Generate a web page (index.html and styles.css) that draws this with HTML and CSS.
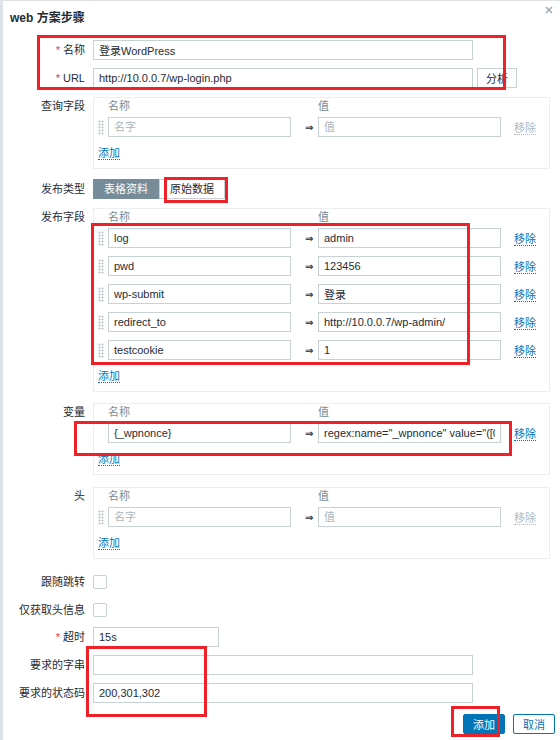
FILE: index.html
```html
<!DOCTYPE html>
<html lang="zh-cn">
<head>
    <meta charset="UTF-8">
    <meta name="viewport" content="width=device-width, initial-scale=1.0">
    <title>web 方案步骤</title>
    <link rel="stylesheet" href="styles.css">
</head>
<body>
    <div class="dialog">
        <div class="head">
            <h3>web 方案步骤</h3>
            <svg class="close" width="8" height="8" viewBox="0 0 8 8"><path d="M1 1L7 7M7 1L1 7" stroke="#a3adb3" stroke-width="1.6"/></svg>
        </div>
        <div class="form">
            <div class="row">
                <label class="lbl req">名称</label>
                <div><input class="field w-lg" type="text" value="登录WordPress"></div>
            </div>
            <div class="row">
                <label class="lbl req">URL</label>
                <div class="inline">
                    <input class="field w-lg" type="text" value="http://10.0.0.7/wp-login.php">
                    <button class="btn-plain">分析</button>
                </div>
            </div>

            <div class="row gap-9">
                <label class="lbl top">查询字段</label>
                <div class="box">
                    <div class="pairs hdr"><span></span><span>名称</span><span></span><span>值</span></div>
                    <div class="pairs">
                        <span class="drag"></span>
                        <input class="field" type="text" placeholder="名字">
                        <span class="arr">⇒</span>
                        <input class="field" type="text" placeholder="值">
                        <span><span class="rm off">移除</span></span>
                    </div>
                    <div class="add"><span>添加</span></div>
                </div>
            </div>

            <div class="row gap-10">
                <label class="lbl">发布类型</label>
                <div class="seg"><span class="on">表格资料</span><span>原始数据</span></div>
            </div>

            <div class="row gap-9">
                <label class="lbl top">发布字段</label>
                <div class="box">
                    <div class="pairs hdr"><span></span><span>名称</span><span></span><span>值</span></div>
                    <div class="pairs">
                        <span class="drag"></span>
                        <input class="field" type="text" value="log">
                        <span class="arr">⇒</span>
                        <input class="field" type="text" value="admin">
                        <span><span class="rm">移除</span></span>

                        <span class="drag"></span>
                        <input class="field" type="text" value="pwd">
                        <span class="arr">⇒</span>
                        <input class="field" type="text" value="123456">
                        <span><span class="rm">移除</span></span>

                        <span class="drag"></span>
                        <input class="field" type="text" value="wp-submit">
                        <span class="arr">⇒</span>
                        <input class="field" type="text" value="登录">
                        <span><span class="rm">移除</span></span>

                        <span class="drag"></span>
                        <input class="field" type="text" value="redirect_to">
                        <span class="arr">⇒</span>
                        <input class="field" type="text" value="http://10.0.0.7/wp-admin/">
                        <span><span class="rm">移除</span></span>

                        <span class="drag"></span>
                        <input class="field" type="text" value="testcookie">
                        <span class="arr">⇒</span>
                        <input class="field" type="text" value="1">
                        <span><span class="rm">移除</span></span>
                    </div>
                    <div class="add"><span>添加</span></div>
                </div>
            </div>

            <div class="row gap-11">
                <label class="lbl top">变量</label>
                <div class="box">
                    <div class="pairs hdr"><span></span><span>名称</span><span></span><span>值</span></div>
                    <div class="pairs">
                        <span></span>
                        <input class="field" type="text" value="{_wpnonce}">
                        <span class="arr">⇒</span>
                        <input class="field" type="text" value='regex:name="_wpnonce" value="([0-9a-z]{10})"'>
                        <span><span class="rm">移除</span></span>
                    </div>
                    <div class="add"><span>添加</span></div>
                </div>
            </div>

            <div class="row gap-12">
                <label class="lbl top">头</label>
                <div class="box">
                    <div class="pairs hdr"><span></span><span>名称</span><span></span><span>值</span></div>
                    <div class="pairs">
                        <span class="drag"></span>
                        <input class="field" type="text" placeholder="名字">
                        <span class="arr">⇒</span>
                        <input class="field" type="text" placeholder="值">
                        <span><span class="rm off">移除</span></span>
                    </div>
                    <div class="add"><span>添加</span></div>
                </div>
            </div>

            <div class="row gap-13">
                <label class="lbl">跟随跳转</label>
                <div><span class="chk"></span></div>
            </div>
            <div class="row">
                <label class="lbl">仅获取头信息</label>
                <div><span class="chk"></span></div>
            </div>
            <div class="row gap-7">
                <label class="lbl req">超时</label>
                <div><input class="field w-sm" type="text" value="15s"></div>
            </div>
            <div class="row">
                <label class="lbl">要求的字串</label>
                <div><input class="field w-lg" type="text" value=""></div>
            </div>
            <div class="row">
                <label class="lbl">要求的状态码</label>
                <div><input class="field w-lg" type="text" value="200,301,302"></div>
            </div>
        </div>
        <div class="foot">
            <button class="btn-main">添加</button>
            <button class="btn-alt">取消</button>
        </div>
    </div>

    <div class="mark mark-1"></div>
    <div class="mark mark-2"></div>
    <div class="mark mark-3"></div>
    <div class="mark mark-4"></div>
    <div class="mark mark-5"></div>
    <div class="mark mark-6"></div>
</body>
</html>
```

FILE: styles.css
```css
body {
    margin: 0;
    font-family: "Liberation Sans", Arial, "Noto Sans CJK SC", sans-serif;
    font-size: 11px;
    color: #1f2c33;
    background: #fff;
}
.dialog {
    position: relative;
    width: 557px;
    height: 739px;
    border-left: 3px solid #dde3e6;
    border-top: 1px solid #dde3e6;
    overflow: hidden;
}
.head {
    height: 34px;
    padding-left: 7px;
}
.head h3 {
    margin: 0;
    font-size: 12px;
    line-height: 34px;
    font-weight: bold;
}
.close {
    position: absolute;
    right: 7px;
    top: 5px;
}
.form {
    padding: 5px 10px 0 0;
}
.row {
    display: grid;
    grid-template-columns: 82px 1fr;
    column-gap: 8px;
    margin-top: 8px;
}
.row:first-child {
    margin-top: 0;
}
.gap-7 { margin-top: 7px; }
.gap-9 { margin-top: 9px; }
.gap-10 { margin-top: 10px; }
.gap-11 { margin-top: 11px; }
.gap-12 { margin-top: 12px; }
.gap-13 { margin-top: 13px; }
.lbl {
    text-align: right;
    line-height: 20px;
    white-space: nowrap;
}
.lbl.top {
    line-height: 16px;
    padding-top: 1px;
}
.req::before {
    content: "* ";
    color: #e0393e;
}
.field {
    box-sizing: border-box;
    height: 20px;
    border: 1px solid #c8d1d6;
    padding: 0 5px;
    margin: 0;
    font: inherit;
    color: inherit;
    background: #fff;
    outline: none;
}
.field::placeholder {
    color: #a9b6bd;
}
.w-lg { width: 380px; }
.w-sm { width: 126px; }
.inline {
    display: flex;
    align-items: center;
}
.btn-plain {
    box-sizing: border-box;
    height: 20px;
    margin-left: 4px;
    padding: 0 8px;
    border: 1px solid #c8d1d6;
    background: #fff;
    font: inherit;
    color: #1f2c33;
}
.box {
    border: 1px solid #ebeef0;
    padding: 0 10px 8px 4px;
}
.pairs {
    display: grid;
    grid-template-columns: 10px 183px 27px 183px 1fr;
    row-gap: 8px;
    align-items: center;
}
.pairs .field {
    width: 183px;
}
.hdr {
    line-height: 16px;
    color: #768d99;
    margin-bottom: 3px;
}
.drag {
    width: 6px;
    height: 15px;
    background: radial-gradient(circle, #c7cfd4 45%, transparent 55%) 0 0 / 3px 3px;
}
.arr {
    padding-left: 14px;
    font-family: "DejaVu Sans", sans-serif;
    font-size: 10px;
    font-weight: bold;
}
.rm {
    margin-left: 13px;
    color: #0275b8;
    border-bottom: 1px dotted #0275b8;
}
.rm.off {
    color: #acbbc2;
    border-bottom-color: #acbbc2;
}
.add {
    margin-top: 9px;
    line-height: 14px;
}
.add span {
    color: #0275b8;
    border-bottom: 1px dotted #0275b8;
}
.seg {
    display: flex;
}
.seg span {
    box-sizing: border-box;
    height: 20px;
    line-height: 18px;
    padding: 0 10px;
    border: 1px solid #c8d1d6;
}
.seg .on {
    background: #768d99;
    border-color: #768d99;
    color: #fff;
}
.chk {
    display: block;
    box-sizing: border-box;
    width: 14px;
    height: 14px;
    margin-top: 3px;
    border: 1px solid #c8d1d6;
    border-radius: 2px;
}
.foot {
    display: flex;
    justify-content: flex-end;
    gap: 8px;
    margin-top: 11px;
    padding-right: 5px;
}
.foot button {
    box-sizing: border-box;
    height: 20px;
    padding: 0 9px;
    font: inherit;
    border: 1px solid #0275b8;
    border-radius: 2px;
}
.btn-main {
    background: #0275b8;
    color: #fff;
}
.btn-alt {
    background: #fff;
    color: #0275b8;
}
.mark {
    position: absolute;
    box-sizing: border-box;
    border: 3px solid #ee2028;
}
.mark-1 { left: 37px; top: 35px; width: 469px; height: 55px; }
.mark-2 { left: 164px; top: 177px; width: 64px; height: 26px; }
.mark-3 { left: 91px; top: 223px; width: 379px; height: 142px; }
.mark-4 { left: 74px; top: 421px; width: 438px; height: 35px; }
.mark-5 { left: 86px; top: 646px; width: 121px; height: 71px; }
.mark-6 { left: 451px; top: 706px; width: 49px; height: 31px; }
```
